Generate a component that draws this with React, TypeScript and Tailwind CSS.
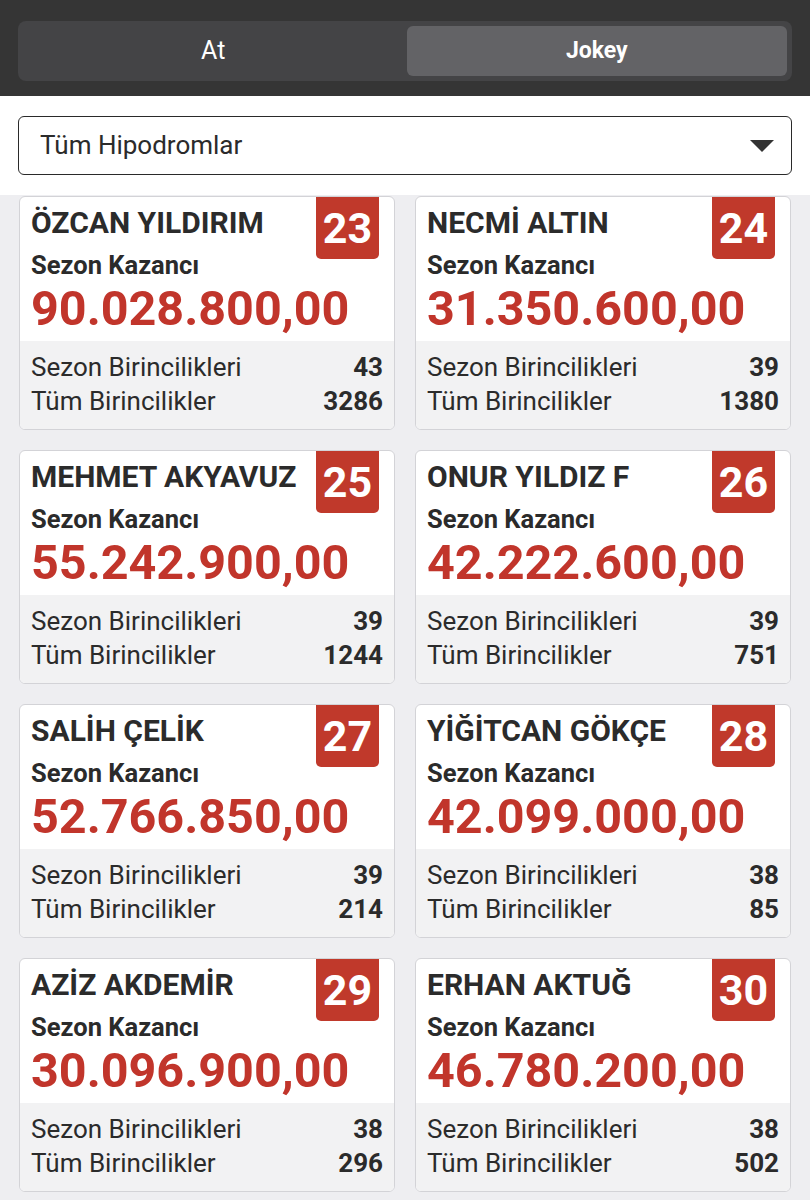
import { useState } from 'react'

type Jokey = {
  rank: number
  name: string
  kazanc: string
  sezon: number
  toplam: number
}

const jokeys: Jokey[] = [
  { rank: 23, name: 'ÖZCAN YILDIRIM', kazanc: '90.028.800,00', sezon: 43, toplam: 3286 },
  { rank: 24, name: 'NECMİ ALTIN', kazanc: '31.350.600,00', sezon: 39, toplam: 1380 },
  { rank: 25, name: 'MEHMET AKYAVUZ', kazanc: '55.242.900,00', sezon: 39, toplam: 1244 },
  { rank: 26, name: 'ONUR YILDIZ F', kazanc: '42.222.600,00', sezon: 39, toplam: 751 },
  { rank: 27, name: 'SALİH ÇELİK', kazanc: '52.766.850,00', sezon: 39, toplam: 214 },
  { rank: 28, name: 'YİĞİTCAN GÖKÇE', kazanc: '42.099.000,00', sezon: 38, toplam: 85 },
  { rank: 29, name: 'AZİZ AKDEMİR', kazanc: '30.096.900,00', sezon: 38, toplam: 296 },
  { rank: 30, name: 'ERHAN AKTUĞ', kazanc: '46.780.200,00', sezon: 38, toplam: 502 },
]

function JokeyCard({ j }: { j: Jokey }) {
  return (
    <div className="relative flex h-[234px] flex-col overflow-hidden rounded-md border border-[#d3d3d7] bg-white">
      {/* rank badge */}
      <div className="absolute right-[15px] top-0 flex h-[62px] w-[63px] items-center justify-center rounded-b-[5px] bg-[#c0392b] text-[43px] font-bold leading-none text-white">
        {j.rank}
      </div>

      <div className="flex flex-1 flex-col px-[11px] pt-[6px]">
        <div className="h-[40px] text-[30px] font-bold leading-[40px] text-[#2b2b2b]">{j.name}</div>
        <div className="mt-[6px] text-[25.5px] font-bold leading-[32px] text-[#2b2b2b]">Sezon Kazancı</div>
        <div className="mt-px text-[48.5px] font-bold leading-[54px] text-[#c1352b]">{j.kazanc}</div>
      </div>

      <div className="flex h-[88px] flex-col bg-[#f2f2f3] px-[11px] pt-[9px]">
        <div className="flex h-[34px] items-center justify-between text-[26px] text-[#2b2b2b]">
          <span>Sezon Birincilikleri</span>
          <span className="font-bold">{j.sezon}</span>
        </div>
        <div className="flex h-[34px] items-center justify-between text-[26px] text-[#2b2b2b]">
          <span>Tüm Birincilikler</span>
          <span className="font-bold">{j.toplam}</span>
        </div>
      </div>
    </div>
  )
}

export default function App() {
  const [tab, setTab] = useState<'at' | 'jokey'>('jokey')

  return (
    <div className="flex h-[1200px] w-[810px] flex-col overflow-hidden bg-[#eeeef1] font-['Roboto','Liberation_Sans',sans-serif]">
      {/* At / Jokey switch */}
      <div className="bg-[#353535] px-[18px] pb-[15px] pt-[21px]">
        <div className="flex h-[60px] gap-[3px] rounded-lg bg-[#444446] p-[5px]">
          <button
            onClick={() => setTab('at')}
            className={
              tab === 'at'
                ? 'flex-1 rounded-md bg-[#636366] text-[25px] font-bold text-white'
                : 'flex-1 rounded-md text-[25px] text-white'
            }
          >
            At
          </button>
          <button
            onClick={() => setTab('jokey')}
            className={
              tab === 'jokey'
                ? 'flex-1 rounded-md bg-[#636366] text-[23px] font-bold text-white'
                : 'flex-1 rounded-md text-[23px] text-white'
            }
          >
            Jokey
          </button>
        </div>
      </div>

      {/* hippodrome filter */}
      <div className="bg-white px-[18px] pb-[20px] pt-[20px]">
        <div className="flex h-[59px] items-center justify-between rounded-[6px] border-[1.5px] border-[#2a2a2a] pl-[21px] pr-[17px]">
          <span className="text-[26px] text-[#2b2b2b]">Tüm Hipodromlar</span>
          <svg width="24" height="12" viewBox="0 0 24 12">
            <path d="M0 0h24L12 12z" fill="#333" />
          </svg>
        </div>
      </div>

      {/* jokey cards */}
      <div className="grid grid-cols-2 gap-x-[20px] gap-y-[20px] px-[19px] pt-px">
        {jokeys.map(j => (
          <JokeyCard key={j.rank} j={j} />
        ))}
      </div>
    </div>
  )
}
